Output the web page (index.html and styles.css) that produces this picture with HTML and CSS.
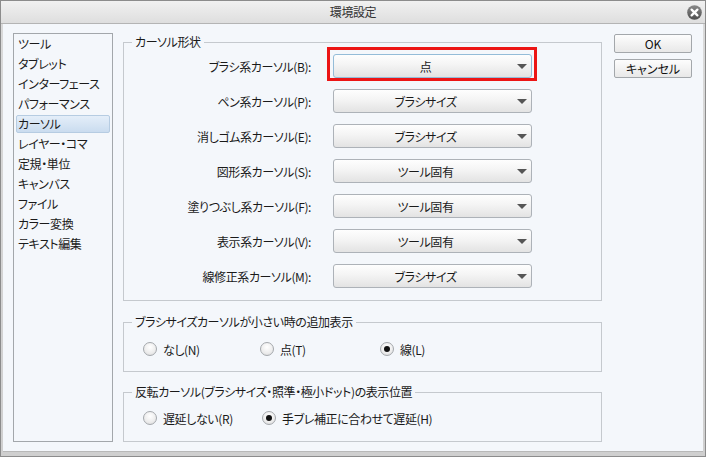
FILE: index.html
```html
<!DOCTYPE html>
<html lang="ja">
<head>
    <meta charset="UTF-8">
    <title>環境設定</title>
    <link rel="stylesheet" href="styles.css">
</head>
<body>
    <div class="window">
        <div class="titlebar">
            <span></span>
            <span class="title">環境設定</span>
            <span class="close">
                <svg width="15" height="15" viewBox="0 0 15 15">
                    <defs>
                        <linearGradient id="cg" x1="0" y1="0" x2="0" y2="1">
                            <stop offset="0" stop-color="#8a8a8a"/>
                            <stop offset="1" stop-color="#4e4e4e"/>
                        </linearGradient>
                    </defs>
                    <circle cx="7.5" cy="7.5" r="7.3" fill="url(#cg)"/>
                    <path d="M4.6 4.6 L10.4 10.4 M10.4 4.6 L4.6 10.4" stroke="#fff" stroke-width="2.3" stroke-linecap="round"/>
                </svg>
            </span>
        </div>

        <div class="content">
            <ul class="nav">
                <li>ツール</li>
                <li>タブレット</li>
                <li>インターフェース</li>
                <li>パフォーマンス</li>
                <li class="sel">カーソル</li>
                <li>レイヤー・コマ</li>
                <li>定規・単位</li>
                <li>キャンバス</li>
                <li>ファイル</li>
                <li>カラー変換</li>
                <li>テキスト編集</li>
            </ul>

            <div class="main">
                <fieldset class="group shape">
                    <legend>カーソル形状</legend>
                    <div class="row">
                        <label>ブラシ系カーソル(B):</label>
                        <div class="select focus"><span>点</span><i class="arrow"></i></div>
                    </div>
                    <div class="row">
                        <label>ペン系カーソル(P):</label>
                        <div class="select"><span>ブラシサイズ</span><i class="arrow"></i></div>
                    </div>
                    <div class="row">
                        <label>消しゴム系カーソル(E):</label>
                        <div class="select"><span>ブラシサイズ</span><i class="arrow"></i></div>
                    </div>
                    <div class="row">
                        <label>図形系カーソル(S):</label>
                        <div class="select"><span>ツール固有</span><i class="arrow"></i></div>
                    </div>
                    <div class="row">
                        <label>塗りつぶし系カーソル(F):</label>
                        <div class="select"><span>ツール固有</span><i class="arrow"></i></div>
                    </div>
                    <div class="row">
                        <label>表示系カーソル(V):</label>
                        <div class="select"><span>ツール固有</span><i class="arrow"></i></div>
                    </div>
                    <div class="row">
                        <label>線修正系カーソル(M):</label>
                        <div class="select"><span>ブラシサイズ</span><i class="arrow"></i></div>
                    </div>
                </fieldset>

                <fieldset class="group extra">
                    <legend>ブラシサイズカーソルが小さい時の追加表示</legend>
                    <div class="radios">
                        <div class="opt w117"><span class="dot"></span>なし(N)</div>
                        <div class="opt w120"><span class="dot"></span>点(T)</div>
                        <div class="opt"><span class="dot on"></span>線(L)</div>
                    </div>
                </fieldset>

                <fieldset class="group delay">
                    <legend>反転カーソル(ブラシサイズ・照準・極小ドット)の表示位置</legend>
                    <div class="radios">
                        <div class="opt w119"><span class="dot"></span>遅延しない(R)</div>
                        <div class="opt"><span class="dot on"></span>手ブレ補正に合わせて遅延(H)</div>
                    </div>
                </fieldset>
            </div>

            <div class="actions">
                <button>OK</button>
                <button>キャンセル</button>
            </div>
        </div>
    </div>
</body>
</html>
```

FILE: styles.css
```css
body {
    margin: 0;
    font-family: "Noto Sans CJK JP", "Liberation Sans", sans-serif;
    font-size: 12px;
    font-feature-settings: "palt";
    letter-spacing: -0.4px;
    color: #1a1a1a;
}
.window {
    width: 706px;
    height: 457px;
    box-sizing: border-box;
    border: 1px solid #8c8c8c;
    background: linear-gradient(#dadada, #cfcfcf);
    display: flex;
    flex-direction: column;
}
.titlebar {
    height: 22px;
    display: grid;
    grid-template-columns: 1fr auto 1fr;
    align-items: center;
    padding: 0 3px;
    background: linear-gradient(#f1f1f1, #dedede);
    border-bottom: 1px solid #b4b4b4;
}
.title {
    color: #333;
    line-height: 22px;
}
.close {
    justify-self: end;
    display: flex;
    padding-top: 1px;
}
.content {
    flex: 1;
    display: flex;
    margin: 0 2px 4px;
    padding: 9px 11px 9px 10px;
    background: #f4f7fb;
    border-bottom: 1px solid #b8b8b8;
}
.nav {
    width: 100px;
    box-sizing: border-box;
    margin: 0;
    padding: 1px 0 0;
    list-style: none;
    border: 1px solid #a3a7ab;
    background: #f4f7fb;
}
.nav li {
    height: 18px;
    line-height: 18px;
    margin: 0 2px 2px;
    padding-left: 2px;
    white-space: nowrap;
}
.nav li.sel {
    height: 16px;
    line-height: 16px;
    padding-left: 1px;
    border: 1px solid #b6cce2;
    border-radius: 2px;
    background: linear-gradient(#e4eef9, #cadcef);
}
.main {
    width: 479px;
    margin-left: 10px;
    padding-top: 1px;
    display: flex;
    flex-direction: column;
}
.group {
    margin: 0;
    min-width: 0;
    border: 1px solid #c5c9ce;
}
.group legend {
    margin-left: 8px;
    padding: 0 3px;
    height: 16px;
    line-height: 16px;
    white-space: nowrap;
}
.shape {
    padding: 4px 0 12px;
}
.extra {
    margin-top: 13px;
    padding: 11px 0 14px;
}
.delay {
    margin-top: 12px;
    padding: 10px 0 15px;
}
.row {
    display: flex;
    align-items: center;
    height: 24px;
}
.row + .row {
    margin-top: 11px;
}
.row label {
    width: 187px;
    margin-right: 22px;
    text-align: right;
    white-space: nowrap;
}
.select {
    position: relative;
    width: 199px;
    height: 24px;
    box-sizing: border-box;
    display: flex;
    align-items: center;
    border: 1px solid #adb2b8;
    border-radius: 3px;
    background: linear-gradient(#fefefe, #f4f4f4 45%, #e3e3e3);
}
.select span {
    flex: 1;
    text-align: center;
}
.select.focus {
    border-color: #94bcd8;
}
.select.focus::after {
    content: "";
    position: absolute;
    top: -8px;
    bottom: -4px;
    left: -7px;
    right: -6px;
    border: 3px solid #ec1515;
}
.arrow {
    width: 0;
    height: 0;
    margin-right: 4px;
    border-left: 5px solid transparent;
    border-right: 5px solid transparent;
    border-top: 5px solid #555;
}
.radios {
    display: flex;
    align-items: center;
    height: 16px;
    padding-left: 19px;
}
.opt {
    display: flex;
    align-items: center;
    white-space: nowrap;
}
.w117 { width: 117px; }
.w119 { width: 119px; }
.w120 { width: 120px; }
.dot {
    width: 14px;
    height: 14px;
    box-sizing: border-box;
    margin-right: 6px;
    border: 1px solid #a4a8ac;
    border-radius: 50%;
    background: radial-gradient(circle at 50% 35%, #ffffff, #ececec 60%, #d6d6d6);
    display: flex;
    align-items: center;
    justify-content: center;
}
.dot.on::after {
    content: "";
    width: 6px;
    height: 6px;
    border-radius: 50%;
    background: #111;
}
.actions {
    width: 78px;
    margin-left: 12px;
    padding-top: 1px;
    display: flex;
    flex-direction: column;
    gap: 6px;
}
.actions button {
    width: 78px;
    height: 19px;
    padding: 0;
    font: inherit;
    color: #111;
    border: 1px solid #a3a7ab;
    border-radius: 2px;
    background: linear-gradient(#fdfdfd, #e8e8e8);
}
```
